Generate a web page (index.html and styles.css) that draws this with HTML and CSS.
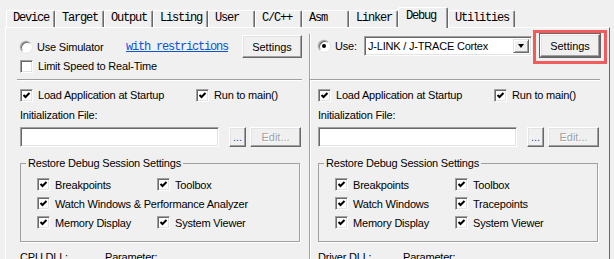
FILE: index.html
```html
<!DOCTYPE html>
<html lang="en">
<head>
    <meta charset="UTF-8">
    <title>Options for Target - Debug</title>
    <link rel="stylesheet" href="styles.css">
</head>
<body>
    <div class="dialog">
        <div class="tabs">
            <span class="tab">Device</span>
            <span class="tab">Target</span>
            <span class="tab">Output</span>
            <span class="tab">Listing</span>
            <span class="tab">User</span>
            <span class="tab">C/C++</span>
            <span class="tab">Asm</span>
            <span class="tab">Linker</span>
            <span class="tab active">Debug</span>
            <span class="tab">Utilities</span>
        </div>

        <div class="page">
            <!-- Simulator side -->
            <div class="pane left">
                <div class="top">
                    <div class="row first">
                        <label class="opt use-sim"><span class="radio"></span>Use Simulator</label>
                        <a class="link">with restrictions</a>
                        <button class="btn settings">Settings</button>
                    </div>
                    <div class="row">
                        <label class="opt"><span class="cb"></span>Limit Speed to Real-Time</label>
                    </div>
                </div>
                <div class="sep"></div>

                <div class="row pair">
                    <label class="opt"><span class="cb on"></span>Load Application at Startup</label>
                    <label class="opt"><span class="cb on"></span>Run to main()</label>
                </div>
                <div class="row caption">Initialization File:</div>
                <div class="file-row">
                    <span class="input"></span>
                    <button class="btn dots">...</button>
                    <button class="btn edit" disabled>Edit...</button>
                </div>

                <fieldset class="group">
                    <legend>Restore Debug Session Settings</legend>
                    <label class="opt"><span class="cb on"></span>Breakpoints</label>
                    <label class="opt"><span class="cb on"></span>Toolbox</label>
                    <label class="opt wide"><span class="cb on"></span>Watch Windows &amp; Performance Analyzer</label>
                    <label class="opt"><span class="cb on"></span>Memory Display</label>
                    <label class="opt"><span class="cb on"></span>System Viewer</label>
                </fieldset>

                <div class="dll-row">
                    <span>CPU DLL:</span>
                    <span>Parameter:</span>
                </div>
            </div>

            <!-- Target driver side -->
            <div class="pane right">
                <div class="top">
                    <div class="row first tall">
                        <label class="opt use-drv"><span class="radio on"></span>Use:</label>
                        <div class="combo">
                            <span class="combo-text">J-LINK / J-TRACE Cortex</span>
                            <span class="combo-arrow"></span>
                        </div>
                        <span class="mark">
                            <button class="btn settings default">Settings</button>
                        </span>
                    </div>
                </div>
                <div class="sep"></div>

                <div class="row pair">
                    <label class="opt"><span class="cb on"></span>Load Application at Startup</label>
                    <label class="opt"><span class="cb on"></span>Run to main()</label>
                </div>
                <div class="row caption">Initialization File:</div>
                <div class="file-row">
                    <span class="input"></span>
                    <button class="btn dots">...</button>
                    <button class="btn edit" disabled>Edit...</button>
                </div>

                <fieldset class="group">
                    <legend>Restore Debug Session Settings</legend>
                    <label class="opt"><span class="cb on"></span>Breakpoints</label>
                    <label class="opt"><span class="cb on"></span>Toolbox</label>
                    <label class="opt"><span class="cb on"></span>Watch Windows</label>
                    <label class="opt"><span class="cb on"></span>Tracepoints</label>
                    <label class="opt"><span class="cb on"></span>Memory Display</label>
                    <label class="opt"><span class="cb on"></span>System Viewer</label>
                </fieldset>

                <div class="dll-row">
                    <span>Driver DLL:</span>
                    <span>Parameter:</span>
                </div>
            </div>
        </div>
    </div>
</body>
</html>
```

FILE: styles.css
```css
* {
    margin: 0;
    padding: 0;
    box-sizing: border-box;
}

body {
    width: 614px;
    height: 259px;
    overflow: hidden;
    background: #f0f0f0;
    color: #000;
    font-family: "Liberation Sans", Arial, sans-serif;
    font-size: 11px;
    letter-spacing: -0.2px;
}

.dialog {
    padding: 7px 0 0 5px;
}

/* tab strip */
.tabs {
    display: flex;
    align-items: flex-end;
    height: 20px;
    padding-left: 1px;
}

.tab {
    height: 17px;
    min-width: 47px;
    padding: 0 5px 0 6px;
    line-height: 15px;
    font-family: "Liberation Mono", monospace;
    font-size: 12px;
    letter-spacing: -1.2px;
    background: #f0f0f0;
    border: 1px solid #fff;
    border-right-color: #696969;
    border-bottom: 0;
    border-radius: 2px 2px 0 0;
    box-shadow: inset -1px 0 #a0a0a0;
}

.tab.active {
    position: relative;
    z-index: 1;
    height: 21px;
    min-width: 50px;
    margin-bottom: -1px;
    padding-left: 7px;
    line-height: 16px;
}

/* tab page */
.page {
    display: grid;
    grid-template-columns: 303px 1fr;
    width: 605px;
    height: 240px;
    padding-top: 6px;
    border: 1px solid #fff;
    border-right-color: #696969;
    border-bottom-color: #696969;
}

.pane.left {
    padding: 0 7px 0 14px;
}

.pane.right {
    padding: 0 9px 0 8px;
    border-left: 1px solid #a0a0a0;
    box-shadow: inset 1px 0 #fff;
}

.top {
    height: 45px;
}

.row {
    display: flex;
    align-items: center;
    height: 16px;
}

.row.first {
    height: 24px;
    padding-top: 1px;
}

.row.first.tall {
    height: 23px;
    padding-top: 0;
}

.sep {
    height: 2px;
    border-top: 1px solid #a0a0a0;
    border-bottom: 1px solid #fff;
}

.left .sep {
    margin-left: -3px;
}

.right .sep {
    margin-left: -8px;
}

.row.pair {
    display: grid;
    grid-template-columns: 176px auto;
    margin-top: 6px;
}

.row.caption {
    margin-top: 4px;
}

.opt {
    display: flex;
    align-items: center;
    gap: 5px;
    white-space: nowrap;
}

.use-sim {
    width: 106px;
}

.use-drv {
    width: 46px;
}

.link {
    font-family: "Liberation Mono", monospace;
    font-size: 12px;
    letter-spacing: -1.2px;
    color: #0a52d6;
    text-decoration: underline;
}

/* classic controls */
.cb {
    flex: none;
    width: 13px;
    height: 13px;
    background: #fff;
    border: 1px solid;
    border-color: #a0a0a0 #fff #fff #a0a0a0;
    box-shadow: inset 1px 1px #696969, inset -1px -1px #e3e3e3;
}

.cb.on {
    background: #fff url("data:image/svg+xml,%3Csvg xmlns='http://www.w3.org/2000/svg' width='11' height='11'%3E%3Cpath d='M2.5 5 L4.5 7 L8.5 3' fill='none' stroke='%23000' stroke-width='2'/%3E%3C/svg%3E") center / 11px 11px no-repeat;
}

.radio {
    flex: none;
    display: flex;
    align-items: center;
    justify-content: center;
    width: 12px;
    height: 12px;
    border-radius: 50%;
    background: #fff;
    border: 1px solid;
    border-color: #a0a0a0 #fff #fff #a0a0a0;
    box-shadow: inset 1px 1px #696969, 0 0 0 0.5px #d8d8d8;
}

.radio.on::before {
    content: "";
    width: 4px;
    height: 4px;
    border-radius: 50%;
    background: #000;
}

.btn {
    font: inherit;
    color: #000;
    background: #f0f0f0;
    border: 1px solid;
    border-color: #fff #696969 #696969 #fff;
    box-shadow: inset -1px -1px #a0a0a0, inset 1px 1px #e3e3e3;
}

.btn.settings {
    width: 60px;
    height: 23px;
    margin-left: auto;
}

.btn.default {
    outline: 1px solid #646464;
    outline-offset: 0;
}

.mark {
    position: relative;
    display: flex;
    margin-left: auto;
}

.mark::after {
    content: "";
    position: absolute;
    top: -4px;
    left: -7px;
    right: -7px;
    bottom: -7px;
    border: 3px solid #f25b5b;
}

.combo {
    display: flex;
    width: 168px;
    height: 20px;
    background: #fff;
    border: 1px solid;
    border-color: #a0a0a0 #fff #fff #a0a0a0;
    box-shadow: inset 1px 1px #696969, inset -1px -1px #e3e3e3;
    padding: 2px;
}

.combo-text {
    flex: 1;
    padding-left: 1px;
    line-height: 14px;
}

.combo-arrow {
    width: 16px;
    background: #f0f0f0;
    border: 1px solid;
    border-color: #e3e3e3 #696969 #696969 #e3e3e3;
    box-shadow: inset 1px 1px #fff, inset -1px -1px #a0a0a0;
    display: flex;
    align-items: center;
    justify-content: center;
}

.combo-arrow::before {
    content: "";
    border-left: 3.5px solid transparent;
    border-right: 3.5px solid transparent;
    border-top: 4px solid #000;
}

.file-row {
    display: flex;
    height: 20px;
    margin-top: 4px;
    padding-right: 1px;
}

.input {
    flex: 1;
    background: #fff;
    border: 1px solid;
    border-color: #a0a0a0 #fff #fff #a0a0a0;
    box-shadow: inset 1px 1px #696969, inset -1px -1px #e3e3e3;
}

.btn.dots {
    width: 17px;
    margin-left: 10px;
    color: #3050a0;
    line-height: 10px;
}

.btn.edit {
    width: 51px;
    margin-left: 4px;
    color: #a0a0a0;
    text-shadow: 1px 1px #fff;
}

/* group box */
.group {
    display: grid;
    grid-template-columns: 120px auto;
    grid-auto-rows: 19px;
    align-items: center;
    margin: 10px 2px 0 0;
    padding: 5px 0 9px 16px;
    border: 1px solid #a0a0a0;
    box-shadow: 1px 1px #fff;
}

.group legend {
    margin-left: -11px;
    padding: 0 2px;
    line-height: 13px;
}

.group .wide {
    grid-column: 1 / 3;
}

.dll-row {
    display: grid;
    grid-template-columns: 85px auto;
    margin-top: 8px;
    line-height: 14px;
}
```
